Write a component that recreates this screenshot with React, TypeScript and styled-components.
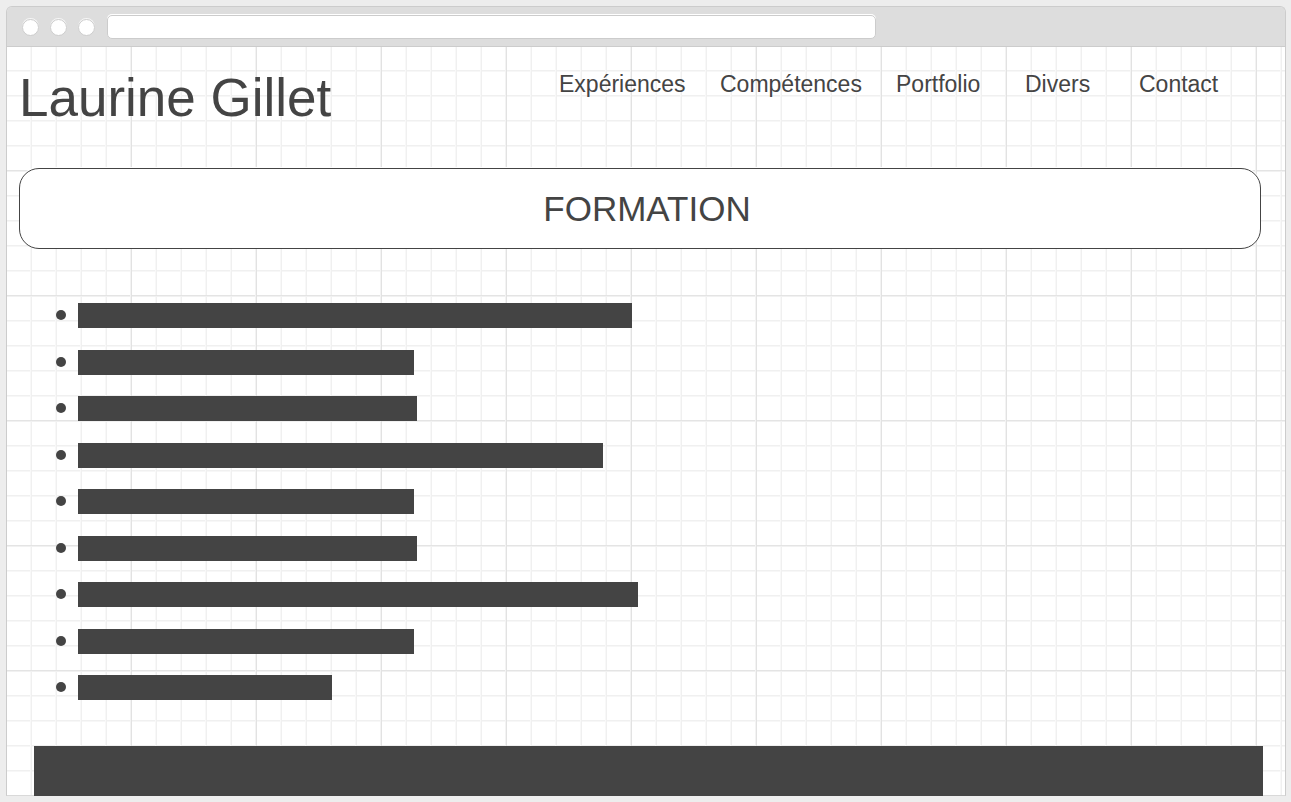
import React from "react";
import styled, { createGlobalStyle } from "styled-components";

const ink = "#444444";

const GlobalStyle = createGlobalStyle`
  *, *::before, *::after { box-sizing: border-box; }
  html { background: #ededed; }
  body {
    margin: 0;
    padding: 6px 5px 6px 6px;
    background: #ededed;
    color: ${ink};
    font-family: "Liberation Sans", Arial, sans-serif;
  }
`;

const BrowserFrame = styled.div`
  border: 1px solid #cccccc;
  border-bottom-color: #d9d9d9;
  border-radius: 6px 6px 0 0;
`;

const TitleBar = styled.div`
  display: flex;
  align-items: center;
  height: 40px;
  padding-left: 15px;
  background: #dddddd;
  border-bottom: 1px solid #cccccc;
  border-radius: 5px 5px 0 0;
`;

const WindowDots = styled.div`
  display: flex;
  gap: 11px;
  padding-top: 2px;
`;

const Dot = styled.span`
  width: 17px;
  height: 17px;
  border: 1px solid #cccccc;
  border-radius: 50%;
  background: #ffffff;
  box-shadow: 0 -1px 0 #f6f6f6;
`;

const AddressBar = styled.input`
  width: calc(60% + 11px);
  height: 24px;
  margin: 0 0 0 12px;
  padding: 0 8px;
  border: 1px solid #cccccc;
  border-radius: 5px;
  background: #ffffff;
  box-shadow: 0 -1px 0 #ffffff;
  color: ${ink};
  font: 14px "Liberation Sans", Arial, sans-serif;
  outline: none;
`;

const GridPaper = styled.div`
  display: flow-root;
  background-color: #ffffff;
  background-image:
    linear-gradient(to right, #f3f3f3 1px, #e2e2e2 1px, #e2e2e2 2px, transparent 2px),
    linear-gradient(to bottom, #e4e4e4 1px, #f1f1f1 1px, #f1f1f1 2px, transparent 2px),
    linear-gradient(to right, #f8f8f8 1px, #f0f0f0 1px, #f0f0f0 2px, transparent 2px),
    linear-gradient(to bottom, #f0f0f0 1px, #f7f7f7 1px, #f7f7f7 2px, transparent 2px);
  background-size: 125px 125px, 125px 125px, 25px 25px, 25px 25px;
  background-position: 123px 0, 0 123px, 23px 0, 0 23px;
`;

const PageHeader = styled.header`
  display: flex;
  justify-content: space-between;
  align-items: flex-start;
  padding: 22px 47px 41px 12px;
`;

const Name = styled.h1`
  margin: 0;
  font-size: 53px;
  font-weight: 400;
  line-height: 58px;
  white-space: nowrap;
`;

const Nav = styled.nav`
  display: grid;
  grid-template-columns: 161px 176px 129px 114px 99px;
  padding-top: 2px;
`;

const NavLink = styled.a`
  color: ${ink};
  font-size: 23px;
  line-height: 26px;
  text-decoration: none;
`;

const Banner = styled.section`
  display: flex;
  align-items: center;
  justify-content: center;
  height: 81px;
  margin: 0 24px 0 12px;
  padding-left: 14px;
  border: 1px solid ${ink};
  border-radius: 20px;
  background: #ffffff;
  box-shadow: 0 -1px 0 #ffffff;
`;

const BannerTitle = styled.h2`
  margin: 0;
  font-size: 35px;
  font-weight: 400;
  line-height: 40px;
`;

const EntryList = styled.ul`
  margin: 54px 24px 46px 49px;
  padding: 0;
  list-style: none;
`;

const Entry = styled.li`
  display: flex;
  align-items: flex-start;
  gap: 12px;
  margin-bottom: 21px;

  &:nth-child(odd) { margin-bottom: 22px; }
  &:last-child { margin-bottom: 0; }

  &::before {
    content: "";
    flex: none;
    width: 10px;
    height: 10px;
    margin-top: 7px;
    border-radius: 50%;
    background: ${ink};
  }
`;

const Bar = styled.span<{ $width: number }>`
  width: ${(p) => p.$width}px;
  height: 25px;
  background: ${ink};
`;

const FooterBlock = styled.footer`
  height: 50px;
  margin: 0 22px -1px 27px;
  background: ${ink};
`;

const links = [
  { label: "Expériences", href: "#experiences" },
  { label: "Compétences", href: "#competences" },
  { label: "Portfolio", href: "#portfolio" },
  { label: "Divers", href: "#divers" },
  { label: "Contact", href: "#contact" },
];

const entryWidths = [554, 336, 339, 525, 336, 339, 560, 336, 254];

export default function App() {
  return (
    <>
      <GlobalStyle />
      <BrowserFrame>
        <TitleBar>
          <WindowDots>
            <Dot />
            <Dot />
            <Dot />
          </WindowDots>
          <AddressBar type="text" aria-label="Adresse" />
        </TitleBar>
        <GridPaper>
          <PageHeader>
            <Name>Laurine Gillet</Name>
            <Nav>
              {links.map((link) => (
                <NavLink key={link.href} href={link.href}>
                  {link.label}
                </NavLink>
              ))}
            </Nav>
          </PageHeader>
          <main>
            <Banner>
              <BannerTitle>FORMATION</BannerTitle>
            </Banner>
            <EntryList>
              {entryWidths.map((width, index) => (
                <Entry key={index}>
                  <Bar $width={width} />
                </Entry>
              ))}
            </EntryList>
          </main>
          <FooterBlock />
        </GridPaper>
      </BrowserFrame>
    </>
  );
}
